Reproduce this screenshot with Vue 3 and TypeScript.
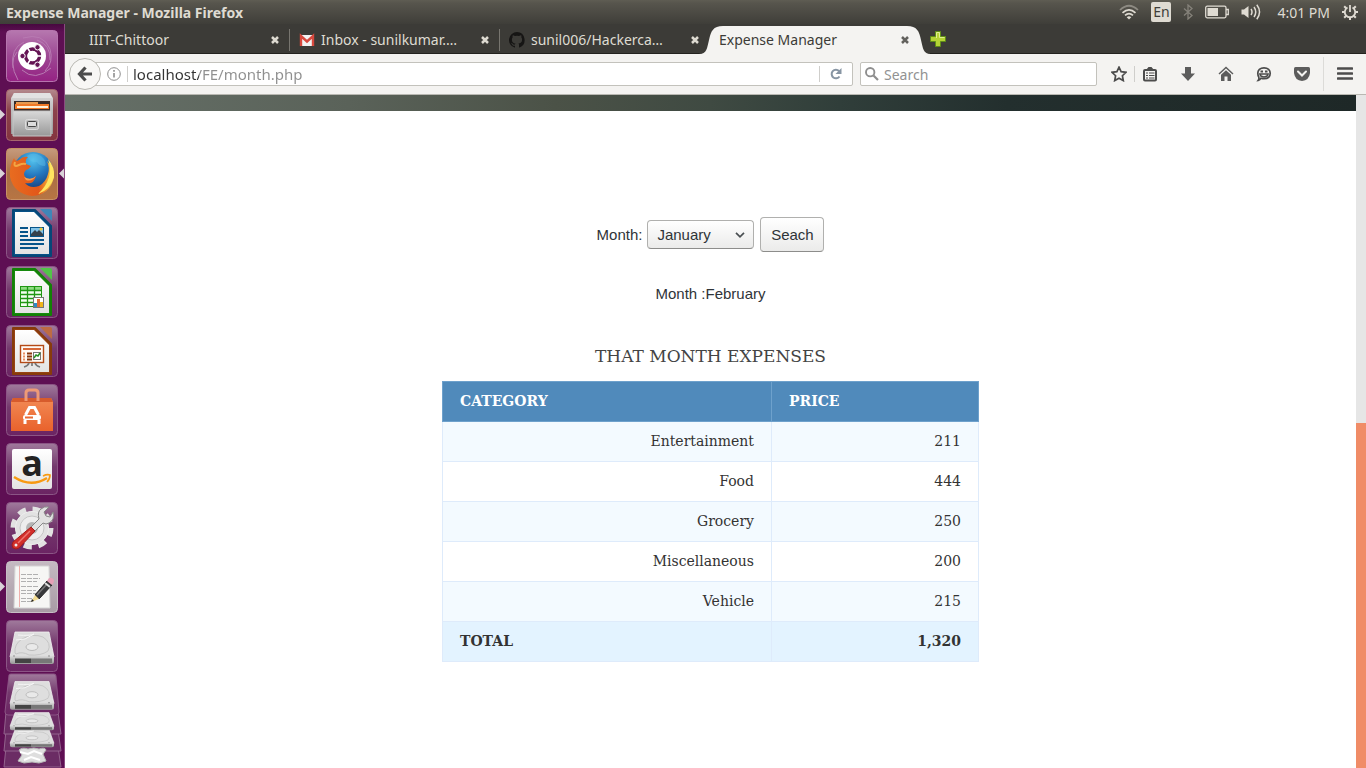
<script setup lang="ts">
import { computed, ref } from 'vue'

interface Tab {
  title: string
  icon: 'none' | 'mail' | 'octo'
}

interface Expense {
  category: string
  price: number
}

const tabs: Tab[] = [
  { title: 'IIIT-Chittoor', icon: 'none' },
  { title: 'Inbox - sunilkumar.…', icon: 'mail' },
  { title: 'sunil006/Hackerca…', icon: 'octo' },
  { title: 'Expense Manager', icon: 'none' },
]
const activeTab = ref(3)

const address = ref('localhost/FE/month.php')
const query = ref('')

const months = [
  'January', 'February', 'March', 'April', 'May', 'June',
  'July', 'August', 'September', 'October', 'November', 'December',
]
const selected = ref('January')
const shown = ref('February')

const expenses: Expense[] = [
  { category: 'Entertainment', price: 211 },
  { category: 'Food', price: 444 },
  { category: 'Grocery', price: 250 },
  { category: 'Miscellaneous', price: 200 },
  { category: 'Vehicle', price: 215 },
]
const total = computed(() =>
  expenses.reduce((sum, e) => sum + e.price, 0).toLocaleString('en-US'),
)

function search() {
  shown.value = selected.value
}
</script>

<template>
  <div class="desktop">
    <header class="panel">
      <span class="panel-title">Expense Manager - Mozilla Firefox</span>
      <div class="indicators">
        <svg width="20" height="16" viewBox="0 0 20 16" fill="none" stroke="#dfdbd2" stroke-width="1.7">
          <path d="M1 6Q10-2.500 19 6" stroke="#8d8a82" />
          <path d="M3.500 8.800Q10 2.800 16.500 8.800" />
          <path d="M6 11.300Q10 7.800 14 11.300" />
          <path d="M7.700 13.200Q10 11.200 12.300 13.200L10 15.500Z" fill="#dfdbd2" stroke="none" />
        </svg>
        <span class="lang">En</span>
        <svg width="10" height="16" viewBox="0 0 10 16" fill="none" stroke="#85827a" stroke-width="1.300">
          <path d="M1 4.500L9 11.500L5 15V1L9 4.500L1 11.500" />
        </svg>
        <svg width="24" height="14" viewBox="0 0 24 14" fill="none" stroke="#dfdbd2" stroke-width="1.300">
          <rect x="0.700" y="1.200" width="20.300" height="11.600" rx="1.500" />
          <rect x="2.500" y="3" width="10.500" height="8" fill="#dfdbd2" stroke="none" />
          <path d="M21 4.500H23.300V9.500H21" />
        </svg>
        <svg width="20" height="16" viewBox="0 0 20 16" fill="none" stroke="#dfdbd2" stroke-width="1.500">
          <path d="M0.500 5.500H3L7.500 2V14L3 10.500H0.500Z" fill="#dfdbd2" stroke="none" />
          <path d="M10 5Q12 8 10 11M13 3Q16.500 8 13 13M15.800 0.800Q21.300 8 15.800 15.200" />
        </svg>
        <span class="clock">4:01 PM</span>
        <svg width="16" height="16" viewBox="0 0 16 16" fill="none" stroke="#dfdbd2">
          <path d="M5.500 3.500A5.200 5.200 0 1 0 10.500 3.500" stroke-width="1.800" />
          <path d="M8 1V8" stroke-width="1.800" />
          <path d="M0 8H3M13 8H16M2.200 2.200L4.200 4.200M11.800 4.200L13.800 2.200M2.200 13.800L4.200 11.800M11.800 11.800L13.800 13.800M8 13V16" stroke-width="2" />
        </svg>
      </div>
    </header>

    <div class="workspace">
      <nav class="launcher" aria-label="Launcher">
        <svg class="defs" width="0" height="0" aria-hidden="true">
          <defs>
            <linearGradient id="tile" x1="0" y1="0" x2="0" y2="1">
              <stop offset="0" stop-color="#a07a9c" /><stop offset=".45" stop-color="#74396d" /><stop offset="1" stop-color="#6b2463" />
            </linearGradient>
            <linearGradient id="dash" x1="0" y1="0" x2="0" y2="1">
              <stop offset="0" stop-color="#b678af" /><stop offset=".5" stop-color="#9d4793" /><stop offset="1" stop-color="#952283" />
            </linearGradient>
            <linearGradient id="filesBg" x1="0" y1="0" x2="0" y2="1">
              <stop offset="0" stop-color="#b48a8e" /><stop offset=".4" stop-color="#8c434c" /><stop offset="1" stop-color="#84343f" />
            </linearGradient>
            <linearGradient id="foxBg" x1="0" y1="0" x2="0" y2="1">
              <stop offset="0" stop-color="#c69b7d" /><stop offset=".5" stop-color="#a96e46" /><stop offset="1" stop-color="#b77543" />
            </linearGradient>
            <linearGradient id="editBg" x1="0" y1="0" x2="0" y2="1">
              <stop offset="0" stop-color="#c5bac2" /><stop offset="1" stop-color="#a89ba5" />
            </linearGradient>
            <linearGradient id="metal" x1="0" y1="0" x2="0" y2="1">
              <stop offset="0" stop-color="#d9d9d9" /><stop offset="1" stop-color="#989898" />
            </linearGradient>
            <linearGradient id="paper" x1="0" y1="0" x2="0" y2="1">
              <stop offset="0" stop-color="#ffffff" /><stop offset="1" stop-color="#e3e3e3" />
            </linearGradient>
            <linearGradient id="orange" x1="0" y1="0" x2="0" y2="1">
              <stop offset="0" stop-color="#f28a55" /><stop offset="1" stop-color="#e9622c" />
            </linearGradient>
            <radialGradient id="globe" cx=".5" cy=".2" r=".8">
              <stop offset="0" stop-color="#53c3ee" /><stop offset=".5" stop-color="#2375bd" /><stop offset="1" stop-color="#15366f" />
            </radialGradient>
            <linearGradient id="fox" x1="0" y1="0" x2="1" y2="0">
              <stop offset="0" stop-color="#e86c20" /><stop offset=".65" stop-color="#e25719" /><stop offset="1" stop-color="#f9d248" />
            </linearGradient>
            <g id="drive">
              <path d="M9 12H43L48 37H4Z" fill="#dedede" stroke="#f3f3f3" stroke-width=".8" />
              <path d="M4 36H48V42Q48 44 46 44H6Q4 44 4 42Z" fill="url(#metal)" />
              <path d="M9 38.500H25V43H9Z" fill="#444" />
              <path d="M25 38.500H46V43H25Z" fill="#777" />
              <path d="M9 33Q8 24 16 19Q27 13 37 17Q46 23 42 31Q35 36 23 35Q16 31 10 34Z" fill="none" stroke="#c6c6c6" />
              <ellipse cx="26" cy="27" rx="6" ry="3.500" fill="#e9e9e9" stroke="#bababa" />
              <path d="M12 15Q24 16 28 14L19 19L10 20" fill="none" stroke="#f5f5f5" />
              <circle cx="8" cy="36" r=".8" fill="#888" /><circle cx="43" cy="36" r=".8" fill="#888" />
            </g>
          </defs>
        </svg>

        <button class="app" type="button" aria-label="Dash">
          <svg viewBox="0 0 65 52">
            <rect x="6.500" y=".5" width="51" height="51" rx="4" fill="url(#dash)" stroke="#b674ae" />
            <g fill="none" stroke="#b87ab2" stroke-width="1">
              <path d="M23 8Q43 2 50 19Q54 32 45 41M13 38Q10 18 24 12M18 50Q8 32 17 22M22 40Q35 52 51 38M37 10Q51 15 50 30" />
            </g>
            <circle cx="32" cy="26" r="14" fill="#fff" />
            <circle cx="32.500" cy="26" r="7" fill="none" stroke="#641454" stroke-width="3.500" />
            <g stroke="#fff" stroke-width="1.500"><path d="M33 26H43M32.500 26L27 17M32.500 26L27 35" /></g>
            <circle cx="32.500" cy="26" r="5" fill="#fff" />
            <g fill="#641454" stroke="#fff"><circle cx="22.500" cy="26" r="2.700" /><circle cx="37.500" cy="17.300" r="2.700" /><circle cx="37.500" cy="34.700" r="2.700" /></g>
          </svg>
        </button>

        <button class="app" type="button" aria-label="Files">
          <svg viewBox="0 0 65 52">
            <path d="M0 20.500L5 25.500L0 30.500Z" fill="#d9d3d8" />
            <rect x="6.500" y=".5" width="51" height="51" rx="4" fill="url(#filesBg)" stroke="#a7666d" />
            <path d="M14 4H50L53 9V45H11V9Z" fill="url(#metal)" />
            <path d="M14 4H50L52 9H12Z" fill="#e2e2e2" />
            <rect x="14" y="12" width="36" height="11" fill="#392b26" />
            <rect x="16" y="13" width="22" height="3" fill="#e79a50" />
            <rect x="15" y="15" width="34" height="5" fill="#f17826" />
            <rect x="17" y="17" width="31" height="2" fill="#fff1d9" />
            <path d="M13 22H51V47H13Z" fill="url(#metal)" stroke="#c6c6c6" />
            <rect x="25.500" y="30.500" width="13" height="10" rx="2" fill="#bcbcbc" stroke="#dcdcdc" />
            <rect x="27.500" y="32.500" width="9" height="5" rx="1" fill="#ddd" stroke="#444" />
          </svg>
        </button>

        <button class="app" type="button" aria-label="Firefox">
          <svg viewBox="0 0 65 52">
            <path d="M0 20.500L5 25.500L0 30.500Z" fill="#d9d3d8" /><path d="M64 20.500L59 25.500L64 30.500Z" fill="#d9d3d8" />
            <rect x="6.500" y=".5" width="51" height="51" rx="4" fill="url(#foxBg)" stroke="#c79165" />
            <circle cx="33" cy="24" r="20" fill="url(#globe)" />
            <path d="M27 8Q33 3 41 8Q47 13 45 18Q39 18 37 14Q30 15 27 8Z" fill="#5fbfe8" opacity=".45" />
            <path d="M14 10Q15 14 19 12Q23 8 28 9Q25 11 26 16L31 18Q29 21 26 22Q22 26 26 30Q31 33 36 28Q34 37 25 35Q30 41 39 38Q46 34 48 26Q50 20 47 13Q55 21 54 29Q50 47 32 48Q14 46 10 29Q9 18 14 10Z" fill="url(#fox)" />
            <path d="M48 11Q55 19 54 29Q50 42 38 46Q46 39 49 29Q51 20 48 11Z" fill="#ffe560" />
            <path d="M15 14Q13 20 19 17Q23 15 26 16" fill="none" stroke="#f3a643" stroke-width="2" />
            <path d="M24 29Q31 33 36 28Q32 34 26 32Z" fill="#f3a153" />
          </svg>
        </button>

        <button class="app" type="button" aria-label="LibreOffice Writer">
          <svg viewBox="0 0 65 52">
            <rect x="6.500" y=".5" width="51" height="51" rx="4" fill="url(#tile)" stroke="#8b5585" />
            <path d="M13 3H35L51 19V49H13Z" fill="#065086" stroke="#064777" stroke-width="2" stroke-linejoin="round" />
            <path d="M15 5H34L49 20V47H15Z" fill="url(#paper)" />
            <path d="M40 2H50Q52 2 52 4V14Z" fill="#3f86b8" />
            <g fill="#07558a"><rect x="20" y="20" width="8" height="2" /><rect x="20" y="24" width="8" height="2" /><rect x="20" y="28" width="8" height="2" /><rect x="20" y="32" width="24" height="2" /><rect x="20" y="36" width="24" height="2" /><rect x="20" y="40" width="18" height="2" /></g>
            <rect x="30.500" y="20.500" width="13" height="9" fill="#82c3e8" stroke="#07558a" />
            <path d="M31 29V27L35 23L37 25L39 23L43 27V29Z" fill="#35414b" /><circle cx="41" cy="22" r="1.500" fill="#f2c835" />
          </svg>
        </button>

        <button class="app" type="button" aria-label="LibreOffice Calc">
          <svg viewBox="0 0 65 52">
            <rect x="6.500" y=".5" width="51" height="51" rx="4" fill="url(#tile)" stroke="#8b5585" />
            <path d="M13 3H35L51 19V49H13Z" fill="#178a0e" stroke="#138006" stroke-width="2" stroke-linejoin="round" />
            <path d="M15 5H34L49 20V47H15Z" fill="url(#paper)" />
            <path d="M40 2H50Q52 2 52 4V14Z" fill="#52c348" />
            <rect x="20.500" y="20.500" width="21" height="20" fill="#f3fff1" stroke="#209713" />
            <rect x="21" y="21" width="20" height="3" fill="#8edc82" />
            <path d="M20 24.500H42M20 28.500H42M20 32.500H42M20 36.500H42M27.500 20V41M34.500 20V41" stroke="#209713" stroke-width="1.300" />
            <rect x="33.500" y="31.500" width="10" height="10" fill="#fff" stroke="#767676" />
            <rect x="34" y="37" width="3" height="4" fill="#2e8bc5" /><rect x="37" y="33" width="3" height="8" fill="#e36b30" /><rect x="40" y="36" width="3" height="5" fill="#f0b61b" />
          </svg>
        </button>

        <button class="app" type="button" aria-label="LibreOffice Impress">
          <svg viewBox="0 0 65 52">
            <rect x="6.500" y=".5" width="51" height="51" rx="4" fill="url(#tile)" stroke="#8b5585" />
            <path d="M13 3H35L51 19V49H13Z" fill="#964214" stroke="#873b0b" stroke-width="2" stroke-linejoin="round" />
            <path d="M15 5H34L49 20V47H15Z" fill="url(#paper)" />
            <path d="M40 2H50Q52 2 52 4V14Z" fill="#bd6b43" />
            <rect x="20.500" y="20.500" width="23" height="17" fill="#fffaf5" stroke="#b44a17" stroke-width="1.400" />
            <rect x="23" y="23" width="18" height="2" fill="#d66838" />
            <path d="M23 28.500H25M23 31.500H25M23 34.500H25" stroke="#e99063" stroke-width="2" /><path d="M27 28.500H32M27 31.500H32M27 34.500H32" stroke="#87370c" stroke-width="2" />
            <rect x="33.500" y="27.500" width="7" height="7" fill="#fff" stroke="#777" /><path d="M34 33L36 30L38 31L40 28" fill="none" stroke="#269123" stroke-width="1.500" />
            <path d="M32 38V41M29 38Q28 41 24 42M35 38Q36 41 40 42" fill="none" stroke="#777" stroke-width="1.700" />
          </svg>
        </button>

        <button class="app" type="button" aria-label="Ubuntu Software">
          <svg viewBox="0 0 65 52">
            <rect x="6.500" y=".5" width="51" height="51" rx="4" fill="url(#tile)" stroke="#8b5585" />
            <path d="M13 14H51L53 18V47H11V18Z" fill="url(#orange)" /><path d="M13 14H51L53 18H11Z" fill="#d75b2c" />
            <path d="M26 17V9Q26 6 29 6H35Q38 6 38 9V17" fill="none" stroke="#ee9a76" stroke-width="3" />
            <path d="M25.500 31L29.500 23.500H34.500L38.500 31M25 36V40M39 36V40" fill="none" stroke="#fff" stroke-width="3" />
            <rect x="23" y="31" width="18" height="5" rx="2" fill="#fff" /><path d="M25 33.500H33" stroke="#e96a35" stroke-width="2" />
          </svg>
        </button>

        <button class="app" type="button" aria-label="Amazon">
          <svg viewBox="0 0 65 52">
            <rect x="6.500" y=".5" width="51" height="51" rx="4" fill="url(#tile)" stroke="#8b5585" />
            <rect x="12" y="6" width="40" height="40" rx="2" fill="url(#paper)" />
            <text x="32" y="33" text-anchor="middle" class="amazon-a">a</text>
            <path d="M14 34Q31 45 47 35" fill="none" stroke="#f79a12" stroke-width="2.500" />
            <path d="M43 33Q47 31 50 32Q50 36 47 39" fill="none" stroke="#f79a12" stroke-width="1.700" />
          </svg>
        </button>

        <button class="app" type="button" aria-label="System Settings">
          <svg viewBox="0 0 65 52">
            <rect x="6.500" y=".5" width="51" height="51" rx="4" fill="url(#tile)" stroke="#8b5585" />
            <circle cx="32" cy="26" r="18.500" fill="none" stroke="#e2e2e2" stroke-width="6" stroke-dasharray="8 6.530" />
            <circle cx="32" cy="26" r="16.500" fill="#e2e2e2" stroke="#eee" />
            <circle cx="32" cy="26" r="12" fill="#ededed" stroke="#c6c6c6" /><circle cx="32" cy="26" r="6" fill="#b5b5b5" />
            <path d="M30 26L39 17Q37 10 41 7Q44 4 49 5L44 10L46 14L50 15L53 10Q55 18 49 21Q46 23 43 21L34 30Z" fill="#e1e1e1" stroke="#888" />
            <path d="M31 25L35 29L19 46Q16 48 13 46Q11 43 13 40Z" fill="#d22e2a" stroke="#a31d1b" /><path d="M30 29L18 41" stroke="#ed7770" stroke-width="1.500" /><circle cx="16" cy="43" r="1.500" fill="#eee" />
          </svg>
        </button>

        <button class="app" type="button" aria-label="Text Editor">
          <svg viewBox="0 0 65 52">
            <path d="M0 20.500L5 25.500L0 30.500Z" fill="#d9d3d8" />
            <rect x="6.500" y=".5" width="51" height="51" rx="4" fill="url(#editBg)" stroke="#c7bec5" />
            <path d="M15 5H49L50 47H14Z" fill="#f6f6f4" stroke="#d4d4d4" />
            <path d="M19.500 5V46" stroke="#eeb0ac" />
            <path d="M21 13.500H38M21 17.500H40M21 20.500H37M21 25.500H38M21 29.500H36M21 32.500H38M21 37.500H36M21 40.500H31" stroke="#b0b0b0" stroke-dasharray="5 1" />
            <path d="M35 34L47 20L52 24L39 38Z" fill="#37383a" stroke="#262626" /><path d="M37 34L47 23" stroke="#777" stroke-width="1.500" />
            <path d="M47 20L49 17Q52 16 54 19Q54 22 52 24Z" fill="#e7a0b7" /><path d="M45 22L50 26" stroke="#ddd" stroke-width="2" />
            <path d="M35 34L31 41L39 38Z" fill="#f2dc91" /><path d="M31 41L32 38L34 40Z" fill="#222" />
          </svg>
        </button>

        <button class="app" type="button" aria-label="Disk">
          <svg viewBox="0 0 65 52">
            <rect x="6.500" y=".5" width="51" height="51" rx="4" fill="url(#tile)" stroke="#8b5585" />
            <use href="#drive" x="6" />
          </svg>
        </button>

        <button class="app stack" type="button" aria-label="More disks">
          <svg viewBox="0 0 65 96">
            <path d="M6 75H58L61 95H4Z" fill="#6b2c64" stroke="#93638d" />
            <path d="M6 58H58L61 79H4Z" fill="#6b2c64" stroke="#93638d" />
            <path d="M6 40H58L61 62H4Z" fill="#6b2c64" stroke="#93638d" />
            <path d="M9 3Q9 2 11 2H54Q56 2 56 4L59 40Q59 43 56 43H8Q5 43 5 40Z" fill="url(#tile)" stroke="#8b5585" />
            <path d="M19 78Q22 75 28 77Q34 75 39 77Q45 75 46 78L43 82L46 89L39 91L32 90L24 91L18 89L22 83Z" fill="#dedede" stroke="#b7b7b7" />
            <path d="M20 80L28 82L34 79L42 82M24 88L31 85L40 88" stroke="#fff" fill="none" stroke-width="2" />
            <g transform="translate(6 51) scale(1 .55)"><use href="#drive" /></g>
            <g transform="translate(6 34) scale(1 .55)"><use href="#drive" /></g>
            <g transform="translate(6 -1) scale(1 .88)"><use href="#drive" /></g>
          </svg>
        </button>
      </nav>

      <div class="browser">
        <div class="tabstrip">
          <div v-for="(tab, i) in tabs" :key="tab.title" class="tab" :class="{ active: i === activeTab, divided: i < activeTab - 1 }">
            <svg v-if="i === activeTab" class="tab-shape" viewBox="0 0 232 28" preserveAspectRatio="none">
              <path d="M0 28C8 28 8 22 10 14C12 5 14 0 24 0H208C218 0 220 5 222 14C224 22 224 28 232 28Z" fill="#f4f3f1" />
            </svg>
            <svg v-if="tab.icon === 'mail'" class="favicon" width="16" height="16" viewBox="0 0 16 16">
              <rect x="1" y="3" width="14" height="11" rx="1" fill="#f3f3f3" /><path d="M2 14V4L8 9.500L14 4V14" fill="none" stroke="#d8493e" stroke-width="2.400" />
            </svg>
            <svg v-if="tab.icon === 'octo'" class="favicon" width="16" height="16" viewBox="0 0 16 16">
              <path fill="#161514" d="M8 0a8 8 0 0 0-2.500 15.600c.4.100.5-.2.500-.4v-1.500c-2.200.5-2.700-1-2.700-1-.4-.9-.9-1.200-.9-1.200-.7-.5.100-.5.100-.5.800.1 1.200.8 1.200.8.700 1.200 1.900.9 2.300.7.100-.5.300-.9.500-1.100-1.800-.2-3.600-.9-3.600-4 0-.9.300-1.600.8-2.100-.1-.2-.4-1 .1-2.100 0 0 .7-.2 2.200.8a7.600 7.600 0 0 1 4 0c1.500-1 2.200-.8 2.200-.8.400 1.100.2 1.900.1 2.100.5.600.8 1.300.8 2.100 0 3.100-1.900 3.700-3.700 3.900.3.300.6.800.6 1.500v2.200c0 .2.100.5.600.4A8 8 0 0 0 8 0Z" />
            </svg>
            <button class="tab-title" type="button" @click="activeTab = i">{{ tab.title }}</button>
            <button class="tab-close" type="button" :aria-label="'Close ' + tab.title">
              <svg width="8" height="8" viewBox="0 0 8 8"><path d="M1 1L7 7M7 1L1 7" stroke="currentColor" stroke-width="2.500" /></svg>
            </button>
          </div>
          <button class="new-tab" type="button" aria-label="New tab">
            <svg width="16" height="16" viewBox="0 0 16 16"><path d="M5.500.5H10.500V5.500H15.500V10.500H10.500V15.500H5.500V10.500H.5V5.500H5.500Z" fill="#b5d335" stroke="#5f8d17" /><path d="M6.500 7V1.500H9.500V6.500H14.500" fill="none" stroke="#e0ee91" /></svg>
          </button>
        </div>

        <div class="toolbar">
          <div class="location">
            <button class="back" type="button" aria-label="Back">
              <svg width="16" height="16" viewBox="0 0 16 16"><path d="M8.500 1.500L2.500 8L8.500 14.500M3 8H15" fill="none" stroke="#4c4c4c" stroke-width="3.200" /></svg>
            </button>
            <div class="urlbar">
              <svg width="14" height="14" viewBox="0 0 14 14" fill="none" stroke="#8e8e8e"><circle cx="7" cy="7" r="6.300" /><path d="M7 6V10.500M7 3V4.700" stroke-width="1.600" /></svg>
              <i class="rule" />
              <input v-model="address" class="address" type="text" aria-label="Address" spellcheck="false">
              <i class="rule" />
              <button class="reload" type="button" aria-label="Reload">
                <svg width="12" height="12" viewBox="0 0 12 12"><path d="M9.500 8.500A4.300 4.300 0 1 1 9 3" fill="none" stroke="#8795a3" stroke-width="2" /><path d="M11.500 0V6H5.500Z" fill="#8795a3" /></svg>
              </button>
            </div>
          </div>
          <label class="searchbar">
            <svg width="14" height="14" viewBox="0 0 14 14" fill="none" stroke="#8e8e8e"><circle cx="5.200" cy="5.200" r="4.200" stroke-width="1.900" /><path d="M8.500 8.500L13 13" stroke-width="2.200" /></svg>
            <input v-model="query" type="text" placeholder="Search" aria-label="Search">
          </label>
          <div class="tools">
            <button type="button" aria-label="Bookmark">
              <svg viewBox="0 0 16 16"><path d="M8 1.200L10.100 5.700L15 6.300L11.400 9.700L12.300 14.600L8 12.200L3.700 14.600L4.600 9.700L1 6.300L5.900 5.700Z" fill="none" stroke="#4c4c4c" stroke-width="1.700" /></svg>
            </button>
            <i class="rule short" />
            <button type="button" aria-label="Bookmarks list">
              <svg viewBox="0 0 16 16"><rect x="2" y="4" width="12" height="10.500" rx="1" fill="none" stroke="#4c4c4c" stroke-width="2" /><path d="M4 4L6.500 1H9.500L12 4Z" fill="#4c4c4c" /><path d="M4 7H6M4 9.500H6M4 12H6M7 7H12.500M7 9.500H12.500M7 12H12.500" stroke="#4c4c4c" stroke-width="1.200" /></svg>
            </button>
            <button type="button" aria-label="Downloads">
              <svg viewBox="0 0 16 16"><path d="M5 1H11V7.500H15L8 15L1 7.500H5Z" fill="#5c5c5c" /></svg>
            </button>
            <button type="button" aria-label="Home">
              <svg viewBox="0 0 16 16"><path d="M1 8L8 1.500L15 8" fill="none" stroke="#5c5c5c" stroke-width="1.500" /><path d="M3 8.700L8 4.200L13 8.700V15H9.500V10.500H6.500V15H3Z" fill="#5c5c5c" /></svg>
            </button>
            <button type="button" aria-label="Hello">
              <svg viewBox="0 0 16 16"><path d="M8 1.800C12 1.800 14.200 4 14.200 7.200S12 12.700 8 12.700Q6.500 12.700 5 12.200Q4 14 2.300 14.300Q3.300 13 2.800 11Q1.800 9.500 1.800 7.200C1.800 4 4 1.800 8 1.800Z" fill="#f4f3f1" stroke="#4c4c4c" stroke-width="1.700" /><path d="M3.800 8H12.200Q11.500 11 8 11T3.800 8Z" fill="#f4f3f1" stroke="#4c4c4c" stroke-width="1.300" /><path d="M4.500 5.500H7M9 5.500H11.500" stroke="#4c4c4c" stroke-width="2" /></svg>
            </button>
            <button type="button" aria-label="Pocket">
              <svg viewBox="0 0 16 16"><path d="M1.500 1H14.500Q16 1 16 2.500V7Q15 14.500 8 15Q1 14.500 0 7V2.500Q0 1 1.500 1Z" fill="#5c5c5c" /><path d="M4 5.500L8 9.500L12 5.500" fill="none" stroke="#f4f3f1" stroke-width="2" stroke-linecap="round" /></svg>
            </button>
            <i class="rule tall" />
            <button type="button" aria-label="Menu">
              <svg viewBox="0 0 16 16"><path d="M1 2.500H15M1 7.500H15M1 12.500H15" stroke="#4c4c4c" stroke-width="2.600" stroke-linecap="round" /></svg>
            </button>
          </div>
        </div>

        <div class="viewport">
          <main class="page">
            <div class="banner" />
            <form class="picker" @submit.prevent="search">
              <label for="month">Month:</label>
              <span class="select-wrap">
                <select id="month" v-model="selected">
                  <option v-for="m in months" :key="m">{{ m }}</option>
                </select>
                <svg class="chevron" width="10" height="6" viewBox="0 0 10 6"><path d="M1 .8L5 4.800L9 .8" fill="none" stroke="#4a4f52" stroke-width="1.700" /></svg>
              </span>
              <button class="submit" type="submit">Seach</button>
            </form>
            <p class="current">Month :{{ shown }}</p>
            <table class="expenses">
              <caption>THAT MONTH EXPENSES</caption>
              <colgroup><col class="col-category"><col></colgroup>
              <thead>
                <tr><th scope="col">CATEGORY</th><th scope="col">PRICE</th></tr>
              </thead>
              <tbody>
                <tr v-for="e in expenses" :key="e.category"><td>{{ e.category }}</td><td>{{ e.price }}</td></tr>
              </tbody>
              <tfoot>
                <tr><th scope="row">TOTAL</th><td>{{ total }}</td></tr>
              </tfoot>
            </table>
          </main>
          <div class="scrollbar"><div class="thumb" /></div>
        </div>
      </div>
    </div>
  </div>
</template>

<style>
html,
body {
  margin: 0;
}
</style>

<style scoped>
* {
  box-sizing: border-box;
}
.desktop {
  display: flex;
  flex-direction: column;
  min-height: 100vh;
  font-family: "Noto Sans", "Open Sans", sans-serif;
  font-size: 14px;
}
button {
  padding: 0;
  border: 0;
  background: none;
  color: inherit;
  font: inherit;
}
svg {
  display: block;
  flex: none;
}
input {
  min-width: 0;
  padding: 0;
  border: 0;
  outline: 0;
  background: none;
  font: inherit;
}
.panel {
  display: flex;
  align-items: center;
  justify-content: space-between;
  height: 24px;
  padding: 0 8px 0 6px;
  background: linear-gradient(#5f5d53, #57554d 3px, #3f3e39);
  color: #dfdbd2;
}
.panel-title {
  font-weight: 700;
}
.indicators {
  display: flex;
  align-items: center;
  gap: 12px;
}
.lang {
  width: 20px;
  height: 20px;
  border-radius: 2px;
  background: #dfdbd2;
  color: #3f3e39;
  font-size: 14px;
  line-height: 20px;
  text-align: center;
}
.clock {
  padding-left: 4px;
}
.workspace {
  display: flex;
  flex: 1;
}
.launcher {
  display: flex;
  flex: none;
  flex-direction: column;
  gap: 7px;
  width: 65px;
  padding-top: 6px;
  border-right: 1px solid #8a4a80;
  background: linear-gradient(#47083f, #5e0f53 8px, #5e0f53);
}
.defs {
  position: absolute;
}
.app svg {
  width: 65px;
  height: 52px;
  overflow: visible;
}
.stack {
  margin-top: -7px;
}
.app.stack svg {
  height: 96px;
}
.amazon-a {
  fill: #222;
  font: bold 36px "Open Sans", sans-serif;
}
.browser {
  display: flex;
  flex: 1;
  flex-direction: column;
  min-width: 0;
}
.tabstrip {
  display: flex;
  height: 30px;
  padding-left: 14px;
  border-bottom: 1px solid #24231f;
  background: #3c3b37;
  color: #dfdbd2;
}
.tab {
  position: relative;
  display: flex;
  align-items: center;
  width: 210px;
  padding: 2px 10px 0;
}
.tab.divided::after {
  content: "";
  position: absolute;
  top: 5px;
  right: -1px;
  width: 1px;
  height: 22px;
  background: #77756f;
}
.tab.active {
  color: #3c3b37;
}
.tab.active .tab-close {
  color: #62615d;
}
.tab-shape {
  position: absolute;
  top: 2px;
  left: -10px;
  width: 232px;
  height: 28px;
}
.favicon {
  margin-right: 6px;
}
.tab-title {
  position: relative;
  flex: 1;
  min-width: 0;
  overflow: hidden;
  text-align: left;
  white-space: nowrap;
}
.tab-close {
  position: relative;
}
.new-tab {
  margin-left: 11px;
}
.toolbar {
  display: flex;
  align-items: center;
  height: 41px;
  padding: 0 13px 0 4px;
  border-bottom: 1px solid #b9b8b2;
  background: #f4f3f1;
}
.location {
  display: flex;
  flex: 1;
  align-items: center;
  margin-right: 7px;
}
.back {
  z-index: 1;
  display: grid;
  flex: none;
  place-items: center;
  width: 32px;
  height: 32px;
  margin-right: -8px;
  border: 1px solid #b9b8b2;
  border-radius: 50%;
  background: #f8f7f5;
}
.urlbar,
.searchbar {
  display: flex;
  align-items: center;
  height: 24px;
  border: 1px solid #c3c2bc;
  border-radius: 2px;
  background: #fff;
}
.urlbar {
  flex: 1;
  gap: 6px;
  padding: 0 10px 0 13px;
}
.rule {
  width: 1px;
  height: 16px;
  background: #cfcecb;
}
.address {
  flex: 1;
  margin-left: -1px;
  background: linear-gradient(90deg, #333 66px, #8f8f8f 66px);
  background-clip: text;
  -webkit-background-clip: text;
  color: transparent;
  font-size: 15px;
}
.reload {
  padding: 0 0 0 4px;
}
.searchbar {
  gap: 5px;
  width: 237px;
  padding: 0 4px;
}
.searchbar input {
  flex: 1;
  color: #333;
}
.searchbar input::placeholder {
  color: #929292;
  opacity: 1;
}
.tools {
  display: flex;
  align-items: center;
  gap: 22px;
  margin-left: 14px;
}
.tools svg {
  width: 16px;
  height: 16px;
}
.rule.short {
  margin: 0 -15px;
}
.rule.tall {
  height: 34px;
  margin: 0 -9px;
  background: #dcdbd8;
}
.viewport {
  display: flex;
  flex: 1;
}
.page {
  display: flex;
  flex: 1;
  flex-direction: column;
  align-items: center;
  background: #fff;
  color: #2f3438;
  font-family: "Liberation Sans", Arial, sans-serif;
  font-size: 15px;
}
.banner {
  width: 100%;
  height: 16px;
  background: linear-gradient(90deg, #667068, #5a6259 22%, #4b5247 38%, #3f4a42 50%, #303e3a 60%, #232f2e 73%, #1e2827);
}
.picker {
  display: flex;
  align-items: center;
  gap: 6px;
  margin-top: 106px;
}
.picker label {
  margin-right: -1px;
}
.select-wrap {
  position: relative;
}
.picker select,
.submit {
  border: 1px solid #b0b0ae;
  border-bottom-color: #8d8d8b;
  border-radius: 4px;
  background: linear-gradient(#fff, #ebebea);
  color: #2f3438;
  font: inherit;
}
.picker select {
  display: block;
  width: 107px;
  height: 29px;
  padding: 0 9px;
  appearance: none;
}
.chevron {
  position: absolute;
  top: 12px;
  right: 9px;
  pointer-events: none;
}
.submit {
  width: 64px;
  height: 35px;
}
.current {
  margin: 33px 0 0;
  line-height: 18px;
}
.expenses {
  width: 537px;
  max-width: 100%;
  margin-top: 41px;
  border-collapse: collapse;
  table-layout: fixed;
  color: #333;
  font-family: "DejaVu Serif", serif;
  font-size: 14px;
  line-height: 18px;
}
.col-category {
  width: 329px;
}
.expenses caption {
  padding-bottom: 12px;
  color: #444;
  font-size: 17px;
  line-height: 25px;
}
.expenses th,
.expenses td {
  height: 40px;
  padding: 0 17px 1px;
  border: 1px solid #deebfb;
  text-align: right;
}
.expenses th {
  text-align: left;
}
.expenses thead th {
  border-color: #6ea1cc;
  background: #508abb;
  color: #fff;
}
.expenses tbody tr:nth-child(odd) {
  background: #f3faff;
}
.expenses tfoot {
  background: #e3f3ff;
  font-weight: 700;
}
.scrollbar {
  display: flex;
  flex-direction: column;
  justify-content: flex-end;
  width: 10px;
  background: #e6e6e6;
}
.thumb {
  height: 51.3%;
  background: #f08c67;
}
</style>
